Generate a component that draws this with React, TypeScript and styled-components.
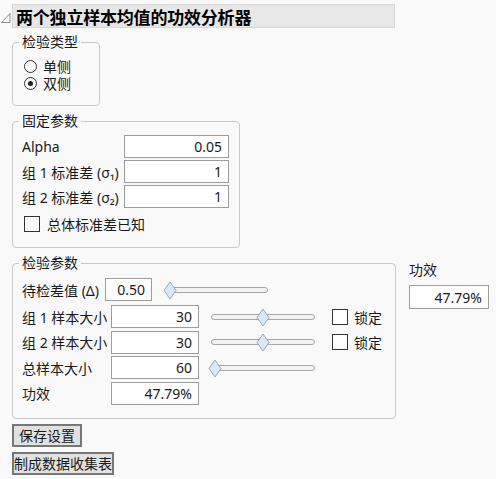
import React from "react";
import styled, { createGlobalStyle } from "styled-components";

const Global = createGlobalStyle`
  html, body { margin: 0; padding: 0; background: #f9f9f9; }
  body {
    font-family: "Noto Sans", "Noto Sans CJK SC", sans-serif;
    font-size: 14px;
    color: #1a1a1a;
  }
`;

const Page = styled.div`
  width: 496px;
  height: 479px;
  padding-top: 4px;
  box-sizing: border-box;
  background: #f9f9f9;
`;

const Header = styled.div`
  display: flex;
  align-items: center;
  height: 24px;
`;

const Disclosure = styled.svg`
  width: 12px;
  height: 24px;
  flex: none;
`;

const TitleBar = styled.div`
  width: 383px;
  height: 24px;
  box-sizing: border-box;
  background: #e7e7e7;
  border: 1px solid #d6d6d6;
  display: flex;
  align-items: center;
  padding-left: 3px;
  font-weight: 700;
  font-size: 17px;
  color: #000;
  letter-spacing: -0.2px;
`;

const Body = styled.div`
  margin-left: 12px;
  display: flex;
  flex-direction: column;
  align-items: flex-start;
`;

const Group = styled.div<{ $w: number; $mt: number }>`
  position: relative;
  width: ${(p) => p.$w}px;
  box-sizing: border-box;
  margin-top: ${(p) => p.$mt}px;
  border: 1px solid #c9c9c9;
  border-radius: 4px;
`;

const Legend = styled.div`
  position: absolute;
  top: -11px;
  left: 6px;
  padding: 0 3px;
  background: #f9f9f9;
  line-height: 20px;
  color: #1a1a1a;
`;

const RadioList = styled.div`
  display: flex;
  flex-direction: column;
  padding: 15px 0 13px 11px;
`;

const OptionRow = styled.label`
  display: flex;
  align-items: center;
  height: 17px;
  gap: 6px;
`;

const OptionText = styled.span`
  display: block;
  height: 17px;
  line-height: 17px;
  overflow: hidden;
`;

const RadioDot = styled.span<{ $on?: boolean }>`
  width: 13px;
  height: 13px;
  box-sizing: border-box;
  border: 1px solid #333;
  border-radius: 50%;
  background: #fff;
  display: flex;
  align-items: center;
  justify-content: center;
  &::after {
    content: "";
    width: 5px;
    height: 5px;
    border-radius: 50%;
    background: ${(p) => (p.$on ? "#222" : "transparent")};
  }
`;

const FixedGrid = styled.div`
  display: flex;
  flex-direction: column;
  padding: 13px 10px 13px 9px;
`;

const FieldRow = styled.div<{ $mt?: number }>`
  display: flex;
  align-items: center;
  height: 23px;
  margin-top: ${(p) => p.$mt ?? 0}px;
`;

const Label = styled.span<{ $w: number }>`
  width: ${(p) => p.$w}px;
  flex: none;
  white-space: nowrap;
`;

const NumBox = styled.div<{ $w: number; $h?: number; $mt?: number }>`
  width: ${(p) => p.$w}px;
  height: ${(p) => p.$h ?? 23}px;
  margin-top: ${(p) => p.$mt ?? 0}px;
  box-sizing: border-box;
  flex: none;
  border: 1px solid #9c9c9c;
  background: #fff;
  display: flex;
  align-items: center;
  justify-content: flex-end;
  padding-right: 6px;
  color: #1a1a1a;
`;

const CheckRow = styled.label<{ $mt?: number }>`
  display: flex;
  align-items: center;
  gap: 7px;
  margin-top: ${(p) => p.$mt ?? 0}px;
  margin-left: 2px;
  white-space: nowrap;
`;

const CheckBox = styled.span`
  width: 16px;
  height: 16px;
  box-sizing: border-box;
  border: 1px solid #333;
  background: #fff;
  flex: none;
`;

const TestArea = styled.div`
  display: flex;
  align-items: flex-start;
`;

const TestBody = styled.div`
  display: flex;
  flex-direction: column;
  padding: 14px 0 13px 9px;
`;

const TopRow = styled.div`
  display: flex;
  align-items: center;
  height: 23px;
  margin-bottom: 4px;
`;

const ParamGrid = styled.div`
  display: grid;
  grid-template-columns: 89px 88px 122px auto;
  grid-auto-rows: 23px;
  row-gap: 2.5px;
  align-items: center;
`;

const SliderWrap = styled.div<{ $w: number; $ml?: number }>`
  position: relative;
  width: ${(p) => p.$w}px;
  height: 20px;
  margin-left: ${(p) => p.$ml ?? 0}px;
  justify-self: end;
`;

const Track = styled.div<{ $l: number; $r: number }>`
  position: absolute;
  left: ${(p) => p.$l}px;
  right: ${(p) => p.$r}px;
  top: 7px;
  height: 6px;
  box-sizing: border-box;
  border: 1px solid #a6a6a6;
  border-radius: 3px;
  background: #f3f3f3;
`;

const Thumb = styled.svg`
  position: absolute;
  top: 1px;
  width: 14px;
  height: 19px;
  margin-left: -7px;
`;

const LockCell = styled.label`
  display: flex;
  align-items: center;
  gap: 6px;
  margin-left: 11px;
  white-space: nowrap;
`;

const PowerSide = styled.div`
  display: flex;
  flex-direction: column;
  margin-left: 13px;
  margin-top: 12px;
`;

const SideLabel = styled.div`
  line-height: 20px;
`;

const Buttons = styled.div`
  display: flex;
  flex-direction: column;
  align-items: flex-start;
  gap: 5px;
  margin-top: 5px;
`;

const Btn = styled.button<{ $pad: number }>`
  height: 23px;
  box-sizing: border-box;
  padding: 0 ${(p) => p.$pad}px;
  border: 2px solid #777;
  background: #e1e1e1;
  font-family: "Noto Sans", "Noto Sans CJK SC", sans-serif;
  font-size: 14px;
  color: #1a1a1a;
  line-height: 19px;
  display: flex;
  align-items: center;
`;

function Slider({
  width,
  inset,
  insetR,
  thumb,
  ml,
}: {
  width: number;
  inset: number;
  insetR: number;
  thumb: number;
  ml?: number;
}) {
  return (
    <SliderWrap $w={width} $ml={ml}>
      <Track $l={inset} $r={insetR} />
      <Thumb viewBox="0 0 14 19" style={{ left: thumb }}>
        <polygon
          points="7,1 13,9.5 7,18 1,9.5"
          fill="#dbe7f5"
          stroke="#8fa9c8"
          strokeWidth="1"
        />
      </Thumb>
    </SliderWrap>
  );
}

export default function App() {
  return (
    <>
      <Global />
      <Page>
        <Header>
          <Disclosure viewBox="0 0 12 24">
            <polygon points="10,9.5 10,18.5 1.5,18.5" fill="none" stroke="#8a8a8a" strokeWidth="1" />
          </Disclosure>
          <TitleBar>两个独立样本均值的功效分析器</TitleBar>
        </Header>
        <Body>
          <Group $w={88} $mt={14}>
            <Legend>检验类型</Legend>
            <RadioList>
              <OptionRow>
                <RadioDot />
                <OptionText>单侧</OptionText>
              </OptionRow>
              <OptionRow>
                <RadioDot $on />
                <OptionText>双侧</OptionText>
              </OptionRow>
            </RadioList>
          </Group>

          <Group $w={228} $mt={15}>
            <Legend>固定参数</Legend>
            <FixedGrid>
              <FieldRow>
                <Label $w={102}>Alpha</Label>
                <NumBox $w={105}>0.05</NumBox>
              </FieldRow>
              <FieldRow $mt={2}>
                <Label $w={102}>组 1 标准差 (σ₁)</Label>
                <NumBox $w={105}>1</NumBox>
              </FieldRow>
              <FieldRow $mt={2}>
                <Label $w={102}>组 2 标准差 (σ₂)</Label>
                <NumBox $w={105}>1</NumBox>
              </FieldRow>
              <CheckRow $mt={6}>
                <CheckBox />
                总体标准差已知
              </CheckRow>
            </FixedGrid>
          </Group>

          <TestArea>
            <Group $w={384} $mt={15}>
              <Legend>检验参数</Legend>
              <TestBody>
                <TopRow>
                  <Label $w={83}>待检差值 (Δ)</Label>
                  <NumBox $w={47}>0.50</NumBox>
                  <Slider width={112} inset={3} insetR={7} thumb={6.5} ml={11} />
                </TopRow>
                <ParamGrid>
                  <Label $w={89}>组 1 样本大小</Label>
                  <NumBox $w={88}>30</NumBox>
                  <Slider width={116} inset={6} insetR={6} thumb={57.5} />
                  <LockCell>
                    <CheckBox />
                    锁定
                  </LockCell>

                  <Label $w={89}>组 2 样本大小</Label>
                  <NumBox $w={88}>30</NumBox>
                  <Slider width={116} inset={6} insetR={6} thumb={57.5} />
                  <LockCell>
                    <CheckBox />
                    锁定
                  </LockCell>

                  <Label $w={89}>总样本大小</Label>
                  <NumBox $w={88}>60</NumBox>
                  <Slider width={116} inset={6} insetR={6} thumb={9.5} />
                  <span />

                  <Label $w={89}>功效</Label>
                  <NumBox $w={88}>47.79%</NumBox>
                  <span />
                  <span />
                </ParamGrid>
              </TestBody>
            </Group>
            <PowerSide>
              <SideLabel>功效</SideLabel>
              <NumBox $w={80} $h={24} $mt={5}>47.79%</NumBox>
            </PowerSide>
          </TestArea>

          <Buttons>
            <Btn $pad={5}>保存设置</Btn>
            <Btn $pad={0}>制成数据收集表</Btn>
          </Buttons>
        </Body>
      </Page>
    </>
  );
}
